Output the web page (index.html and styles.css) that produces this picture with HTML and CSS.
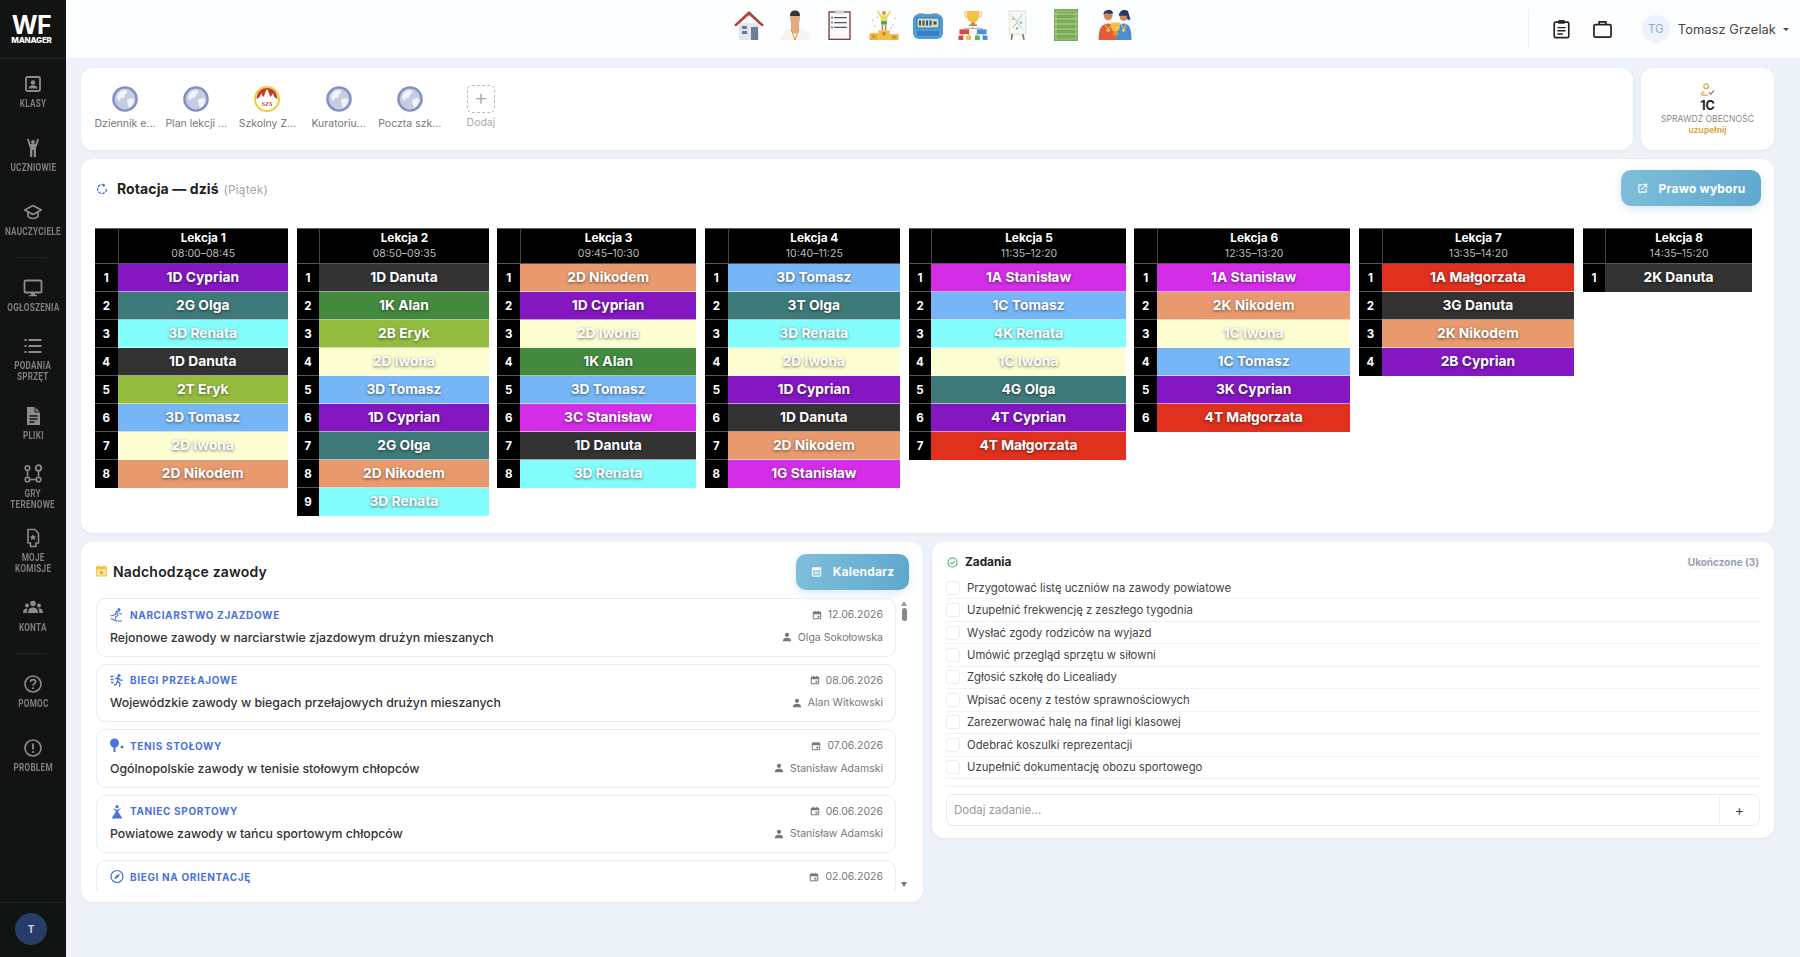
FILE: index.html
```html
<!DOCTYPE html>
<html lang="pl">
<head>
<meta charset="utf-8">
<title>WF Manager</title>
<link rel="stylesheet" href="styles.css">
</head>
<body>
<svg class="defs" width="0" height="0" aria-hidden="true">
  <defs>
    <symbol id="globe" viewBox="0 0 26 26">
      <circle cx="13" cy="13" r="11.6" fill="#c6cce3" stroke="#8490c4" stroke-width="2.4"/>
      <path d="M6 8c2-3 5-4.500 8-4l1.500 2.500-2.500 2-1 3-4 1-.5 3-2.500-3.500zM15 13.500l5-1.500 2.500 2-2.500 6-3 2-1.500-5z" fill="#f4f5fa"/>
    </symbol>
    <symbol id="cal" viewBox="0 0 12 12">
      <path d="M1.500 2.500h9v8h-9z" fill="none" stroke="#777" stroke-width="1.200"/>
      <path d="M1.500 2.500h9v2.500h-9zM6.500 7h2.500v2h-2.500zM3.500 1h1v2h-1zM7.500 1h1v2h-1z" fill="#777"/>
    </symbol>
    <symbol id="user" viewBox="0 0 12 12">
      <circle cx="6" cy="3.400" r="2.500" fill="#777"/>
      <path d="M1 11c0-3 2-4.200 5-4.200s5 1.200 5 4.200z" fill="#777"/>
    </symbol>
  </defs>
</svg>

<div class="app">
  <aside class="sidebar">
    <div class="logo">
      <span class="logo-wf">WF</span>
      <span class="logo-sub">MANAGER</span>
    </div>
    <nav class="nav">
      <a class="nav-item">
        <svg class="nav-icon" viewBox="0 0 20 20"><rect x="3" y="3" width="14" height="14" rx="1.500" fill="none" stroke="#8c8c88" stroke-width="1.800"/><circle cx="10" cy="8.500" r="2.300" fill="#8c8c88"/><path d="M5.500 14.500c.5-2.500 2.200-3.200 4.500-3.200s4 .7 4.500 3.200z" fill="#8c8c88"/></svg>
        <span class="nav-label">Klasy</span>
      </a>
      <a class="nav-item">
        <svg class="nav-icon" viewBox="0 0 20 20"><circle cx="10" cy="4" r="2" fill="#8c8c88"/><path d="M4 1l1.800-.3L7.500 6h5L14.200.7 16 1l-2.300 7.500-.7 1V19h-2.300v-7h-1.400v7H7V9.500l-.7-1z" fill="#8c8c88"/></svg>
        <span class="nav-label">Uczniowie</span>
      </a>
      <a class="nav-item">
        <svg class="nav-icon" viewBox="0 0 20 20"><path d="M10 3.500L1.800 8 10 12.500 18.200 8zM5 10.200v4.300c1.500 1.500 3.200 2 5 2s3.500-.5 5-2v-4.300" fill="none" stroke="#8c8c88" stroke-width="1.700" stroke-linejoin="round"/></svg>
        <span class="nav-label">Nauczyciele</span>
      </a>
      <div class="nav-divider"></div>
      <a class="nav-item">
        <svg class="nav-icon" viewBox="0 0 20 20"><rect x="1.500" y="2.500" width="17" height="12" rx="1" fill="none" stroke="#8c8c88" stroke-width="1.800"/><path d="M8 15h4v2h2v1.200H6V17h2z" fill="#8c8c88"/></svg>
        <span class="nav-label">Ogłoszenia</span>
      </a>
      <a class="nav-item">
        <svg class="nav-icon" viewBox="0 0 20 20"><path d="M5.500 4h13M5.500 10h13M5.500 16h13" stroke="#8c8c88" stroke-width="1.800" fill="none"/><path d="M1.500 3h2v2h-2zM1.500 9h2v2h-2zM1.500 15h2v2h-2z" fill="#8c8c88"/></svg>
        <span class="nav-label">Podania<br>sprzęt</span>
      </a>
      <a class="nav-item">
        <svg class="nav-icon" viewBox="0 0 20 20"><path d="M4 1h8l5 5v13H4z" fill="#8c8c88"/><path d="M12 1v5h5" fill="none" stroke="#111413" stroke-width="1"/><path d="M6.500 10h8M6.500 13h8M6.500 16h5" stroke="#111413" stroke-width="1.300"/></svg>
        <span class="nav-label">Pliki</span>
      </a>
      <a class="nav-item">
        <svg class="nav-icon" viewBox="0 0 20 20"><circle cx="4.500" cy="4" r="2.300" fill="none" stroke="#8c8c88" stroke-width="1.600"/><circle cx="15.500" cy="4" r="2.800" fill="none" stroke="#8c8c88" stroke-width="1.800"/><path d="M4.500 6.500v6M15.500 7v5.500M7 15.500h6" stroke="#8c8c88" stroke-width="1.600"/><circle cx="4.500" cy="15.500" r="2.300" fill="none" stroke="#8c8c88" stroke-width="1.600"/><circle cx="15.500" cy="15.500" r="2.300" fill="none" stroke="#8c8c88" stroke-width="1.600"/></svg>
        <span class="nav-label">Gry<br>terenowe</span>
      </a>
      <a class="nav-item">
        <svg class="nav-icon" viewBox="0 0 20 20"><path d="M5 1.500h7l3.500 4v9.500H13v3.500H7.500V15H5z" fill="none" stroke="#8c8c88" stroke-width="1.600" stroke-linejoin="round"/><path d="M10 6l1 2.200 2.300.2-1.700 1.600.5 2.300-2.100-1.200-2.100 1.200.5-2.300-1.700-1.600 2.300-.2z" fill="#8c8c88"/></svg>
        <span class="nav-label">Moje<br>komisje</span>
      </a>
      <a class="nav-item">
        <svg class="nav-icon" viewBox="0 0 20 20"><circle cx="10" cy="5.500" r="2.800" fill="#8c8c88"/><circle cx="4" cy="7.500" r="2" fill="#8c8c88"/><circle cx="16" cy="7.500" r="2" fill="#8c8c88"/><path d="M5 15c0-4 2-5.500 5-5.500s5 1.500 5 5.500zM0 15c0-3 1.300-4.500 3.500-4.500.5 0 .9.100 1.200.2C4 11.800 3.700 13 3.700 15zM20 15c0-3-1.300-4.500-3.500-4.500-.5 0-.9.100-1.200.2.700 1.100 1 2.300 1 4.300z" fill="#8c8c88"/></svg>
        <span class="nav-label">Konta</span>
      </a>
      <div class="nav-divider"></div>
      <a class="nav-item">
        <svg class="nav-icon" viewBox="0 0 20 20"><circle cx="10" cy="10" r="8" fill="none" stroke="#8c8c88" stroke-width="1.600"/><path d="M7.500 8c0-1.500 1.100-2.400 2.600-2.400s2.500 1 2.500 2.200c0 1.800-2.600 2-2.600 4" fill="none" stroke="#8c8c88" stroke-width="1.600"/><circle cx="10" cy="14.300" r="1" fill="#8c8c88"/></svg>
        <span class="nav-label">Pomoc</span>
      </a>
      <a class="nav-item">
        <svg class="nav-icon" viewBox="0 0 20 20"><circle cx="10" cy="10" r="8" fill="none" stroke="#8c8c88" stroke-width="1.600"/><path d="M10 5.500v6" stroke="#8c8c88" stroke-width="1.800"/><circle cx="10" cy="14" r="1.100" fill="#8c8c88"/></svg>
        <span class="nav-label">Problem</span>
      </a>
    </nav>
    <div class="side-foot"><span class="side-avatar">T</span></div>
  </aside>

  <div class="main">
    <header class="topbar">
      <div></div>
      <div class="top-icons">
        <svg class="ti ti-house" viewBox="0 0 30 30"><path d="M5 13h20v17H5z" fill="#e2e5ec"/><path d="M0 15L15 1l15 14-2 1.500L15 5 2 16.500z" fill="#b1423b"/><path d="M8 16h5v3H8zM8 21h5v3H8z" fill="#5e7ea6"/><path d="M17 17h7v13h-7z" fill="#6d7f98"/></svg>
        <svg class="ti ti-coach" viewBox="0 0 28 30"><path d="M0 30c0-7 4-10 10-11h8c6 1 10 4 10 11z" fill="#f7f4ef"/><path d="M10 12h8v9l-4 3-4-3z" fill="#e2ac80"/><ellipse cx="14" cy="8" rx="5" ry="7" fill="#e2ac80"/><path d="M9 6c0-4 2-5.500 5-5.500S19 2 19 6z" fill="#3a3432"/><path d="M10 19l4 11 4-11" fill="none" stroke="#d7913f" stroke-width="1"/></svg>
        <svg class="ti ti-clip" viewBox="0 0 23 31"><rect x=".7" y="2" width="21.600" height="28.300" fill="#fbfaf8" stroke="#7d3f40" stroke-width="1.400"/><path d="M7 .5h9v3.500H7z" fill="#cfd3d8"/><path d="M6 8h13M6 13h13M6 18h13" stroke="#4c5563" stroke-width="1.300"/><circle cx="3.800" cy="8" r="1.200" fill="#7c8ba0"/><circle cx="3.800" cy="13" r="1.200" fill="#7c8ba0"/><circle cx="3.800" cy="18" r="1.200" fill="#7c8ba0"/></svg>
        <svg class="ti ti-podium" viewBox="0 0 30 31"><path d="M0 24h9v7H0zM21 25h9v6h-9z" fill="#f0b23e"/><path d="M9 21h12v10H9z" fill="#f4bd4a"/><circle cx="15" cy="24.500" r="2" fill="#d98c1c"/><circle cx="4.500" cy="27.500" r="1.700" fill="#d98c1c"/><circle cx="25.500" cy="28" r="1.700" fill="#d98c1c"/><circle cx="15" cy="3" r="2" fill="#c98a5f"/><path d="M7.500 1l1.500-.5 3.500 5h5L21 .5 22.500 1 18.500 8v4h-7V8z" fill="#e8e05c"/><path d="M12 11.500h6V15h-6z" fill="#3aa66a"/><path d="M12.500 15h1.700v6h-1.700zM15.800 15h1.700v6h-1.700z" fill="#c98a5f"/><path d="M3 10h1v1H3zM26 8h1v1h-1zM5 16h1v1H5zM24 15h1v1h-1zM8 7h1v1H8zM22 18h1v1h-1z" fill="#e35a4b"/></svg>
        <svg class="ti ti-watch" viewBox="0 0 30 30"><path d="M5 3h6v3H5zM19 3h6v3h-6z" fill="#e8bd3a"/><rect y="4" width="30" height="25" rx="6" fill="#4b9ddd"/><rect x="4" y="8" width="22" height="10" fill="#cdd9cc" stroke="#2d5f88" stroke-width=".8"/><path d="M6 10.500h2v5H6zM9.500 10.500h2v5h-2zM13 10.500h2v5h-2zM16.500 10.500h2v5h-2zM20.500 11.500h3v3h-3z" fill="#44524c"/><rect x="4" y="21" width="22" height="5" fill="#3a7fc4"/></svg>
        <svg class="ti ti-tree" viewBox="0 0 30 31"><path d="M9 1h12v6c0 4-3 6-6 6s-6-2-6-6z" fill="#f2c14a"/><path d="M6 2h3v5H7zM21 2h3l-1 5h-2z" fill="none" stroke="#f2c14a"/><path d="M13 13h4v2h2v1.500h-8V15h2z" fill="#c4862c"/><path d="M15 17v3M6 21v-2h18v2M4 25v2M11 25v2M19 25v2M26 25v2" stroke="#8d99a8" stroke-width=".8" fill="none"/><path d="M1 20h10v5H1z" fill="#d94b3f"/><path d="M19 20h10v5H19z" fill="#4a90d9"/><path d="M0 26.500h5V31H0z" fill="#d94b3f"/><path d="M8 26.500h5V31H8z" fill="#f2c14a"/><path d="M17 26.500h5V31h-5z" fill="#5bb35a"/><path d="M25 26.500h5V31h-5z" fill="#4a90d9"/></svg>
        <svg class="ti ti-board" viewBox="0 0 19 31"><path d="M1 1h17v24H1z" fill="#f6f7f4" stroke="#d6d8d4" stroke-width=".8"/><path d="M4 6l5 6 5-7M5 18l4-5 5 6" fill="none" stroke="#9cb1a8" stroke-width=".8"/><circle cx="5" cy="9" r="1" fill="#d9a13a"/><circle cx="13" cy="13" r="1" fill="#3a9dd9"/><circle cx="9" cy="19" r="1" fill="#3aa65a"/><path d="M3 25h2l-1 6H2.500zM14 25h2l1 6h-1.500z" fill="#8f7660"/></svg>
        <svg class="ti ti-field" viewBox="0 0 24 32"><rect width="24" height="32" fill="#79ab5c"/><path d="M0 4h24v2H0zM0 9h24v2H0zM0 14h24v2H0zM0 19h24v2H0zM0 24h24v2H0z" fill="#94c06f"/><path d="M2 2h20v28H2z" fill="none" stroke="#b9d6a1" stroke-width=".6"/><path d="M6 7h2v1H6zM15 12h2v1h-2zM9 17h2v1H9zM17 22h2v1h-2zM5 27h2v1H5z" fill="#c98a2d"/></svg>
        <svg class="ti ti-medal" viewBox="0 0 35 31"><circle cx="10" cy="6" r="4.500" fill="#c98a5f"/><path d="M5 5c0-4 3-5 6-5s4 2 4 4c-3 0-6 0-7-1z" fill="#243a6a"/><path d="M0 31c0-12 3-17 10-17s8 5 8 17z" fill="#e25b3d"/><circle cx="26" cy="7" r="4.200" fill="#c98a5f"/><path d="M21 6c0-4 3-6 6-6s4 2 4 3l2 7h-3l-1-4c-3 0-6 0-8 0z" fill="#243a6a"/><path d="M18 31c0-12 2-17 8-17s8 5 8 17z" fill="#4a8ed0"/><path d="M13 13h9v5c0 3-2 4-4.500 4S13 21 13 18z" fill="#f2c14a"/><path d="M15 22h5v4h-5z" fill="#d99e34"/><path d="M6 14l4 6 4-6M23 14l3 6 3-6" fill="none" stroke="#f2d24a" stroke-width="1"/><circle cx="10" cy="21" r="1.800" fill="#f2c14a"/><circle cx="26" cy="21" r="1.800" fill="#f2c14a"/></svg>
      </div>
      <div class="top-right">
        <span class="top-sep"></span>
        <svg class="top-tool" viewBox="0 0 20 22"><rect x="2" y="3.500" width="16" height="17" rx="1.500" fill="none" stroke="#222" stroke-width="1.800"/><path d="M6.500 1.200h7v4h-7z" fill="#222"/><path d="M5.500 9.500h9M5.500 13h9M5.500 16.500h6" stroke="#222" stroke-width="1.600"/></svg>
        <svg class="top-tool" viewBox="0 0 20 20"><rect x="1" y="5.500" width="18" height="13" rx="1.500" fill="none" stroke="#222" stroke-width="1.800"/><path d="M6.500 5.500V2.500h7v3" fill="none" stroke="#222" stroke-width="1.800"/></svg>
        <span class="tg">TG</span>
        <span class="top-name">Tomasz Grzelak</span>
        <span class="caret"></span>
      </div>
    </header>

    <main class="content">
      <section class="row-links">
        <div class="card links">
          <a class="link"><svg class="globe"><use href="#globe"/></svg><span class="link-name">Dziennik e…</span></a>
          <a class="link"><svg class="globe"><use href="#globe"/></svg><span class="link-name">Plan lekcji …</span></a>
          <a class="link">
            <svg class="globe" viewBox="0 0 26 26"><circle cx="13" cy="13" r="12" fill="#fff" stroke="#f1cd3b" stroke-width="2"/><path d="M2.500 13C3 6 7 2 13 2s10 4 10.500 11c-3-1-4-3-4.500-6-1 2-1.500 3-3 4-.5-3-1.500-6-3-8-1.500 2-2.500 5-3 8-1.500-1-2-2-3-4-.5 3-1.500 5-4.500 6z" fill="#c23a2b"/><text class="szs" x="13" y="20" text-anchor="middle">SZS</text></svg>
            <span class="link-name">Szkolny Z…</span>
          </a>
          <a class="link"><svg class="globe"><use href="#globe"/></svg><span class="link-name">Kuratoriu…</span></a>
          <a class="link"><svg class="globe"><use href="#globe"/></svg><span class="link-name">Poczta szk…</span></a>
          <a class="link link-add"><span class="add-box">+</span><span class="link-name">Dodaj</span></a>
        </div>
        <div class="card attend">
          <svg class="attend-icon" viewBox="0 0 16 14"><circle cx="6.500" cy="3.500" r="2.500" fill="none" stroke="#d8a94a" stroke-width="1.300"/><path d="M1.500 13c0-2 .8-3 3-3.500M1.500 13h7" fill="none" stroke="#d8a94a" stroke-width="1.300"/><path d="M9.500 10l2 2 3.500-4" fill="none" stroke="#777" stroke-width="1.100"/></svg>
          <strong class="attend-class">1C</strong>
          <span class="attend-text">Sprawdź obecność</span>
          <span class="attend-link">uzupełnij</span>
        </div>
      </section>

      <section class="card rotation">
        <div class="rot-head">
          <h2 class="rot-title">
            <svg class="rot-icon" viewBox="0 0 12 12"><path d="M10.500 6a4.500 4.500 0 1 1-2-3.700" fill="none" stroke="#4a72dc" stroke-width="1.300" stroke-dasharray="3 1"/><path d="M7 .2l2.500 2.200L7 4z" fill="#4a72dc"/></svg>
            Rotacja — dziś <span class="rot-day">(Piątek)</span>
          </h2>
          <button class="btn btn-choice">
            <svg class="btn-icon" viewBox="0 0 12 12"><path d="M6 2H2v8h8V6" fill="none" stroke="#fff" stroke-width="1.200"/><path d="M5 7l5-5M7 1.500h3.500V5" fill="none" stroke="#fff" stroke-width="1.200"/></svg>
            Prawo wyboru
          </button>
        </div>
        <div class="lessons">
          <table class="lesson">
            <thead><tr><th class="n"></th><th>Lekcja 1<small>08:00–08:45</small></th></tr></thead>
            <tbody>
              <tr><td class="n">1</td><td class="c-cyprian">1D Cyprian</td></tr>
              <tr><td class="n">2</td><td class="c-olga">2G Olga</td></tr>
              <tr><td class="n">3</td><td class="c-renata">3D Renata</td></tr>
              <tr><td class="n">4</td><td class="c-danuta">1D Danuta</td></tr>
              <tr><td class="n">5</td><td class="c-eryk">2T Eryk</td></tr>
              <tr><td class="n">6</td><td class="c-tomasz">3D Tomasz</td></tr>
              <tr><td class="n">7</td><td class="c-iwona">2D Iwona</td></tr>
              <tr><td class="n">8</td><td class="c-nikodem">2D Nikodem</td></tr>
            </tbody>
          </table>
          <table class="lesson">
            <thead><tr><th class="n"></th><th>Lekcja 2<small>08:50–09:35</small></th></tr></thead>
            <tbody>
              <tr><td class="n">1</td><td class="c-danuta">1D Danuta</td></tr>
              <tr><td class="n">2</td><td class="c-alan">1K Alan</td></tr>
              <tr><td class="n">3</td><td class="c-eryk">2B Eryk</td></tr>
              <tr><td class="n">4</td><td class="c-iwona">2D Iwona</td></tr>
              <tr><td class="n">5</td><td class="c-tomasz">3D Tomasz</td></tr>
              <tr><td class="n">6</td><td class="c-cyprian">1D Cyprian</td></tr>
              <tr><td class="n">7</td><td class="c-olga">2G Olga</td></tr>
              <tr><td class="n">8</td><td class="c-nikodem">2D Nikodem</td></tr>
              <tr><td class="n">9</td><td class="c-renata">3D Renata</td></tr>
            </tbody>
          </table>
          <table class="lesson">
            <thead><tr><th class="n"></th><th>Lekcja 3<small>09:45–10:30</small></th></tr></thead>
            <tbody>
              <tr><td class="n">1</td><td class="c-nikodem">2D Nikodem</td></tr>
              <tr><td class="n">2</td><td class="c-cyprian">1D Cyprian</td></tr>
              <tr><td class="n">3</td><td class="c-iwona">2D Iwona</td></tr>
              <tr><td class="n">4</td><td class="c-alan">1K Alan</td></tr>
              <tr><td class="n">5</td><td class="c-tomasz">3D Tomasz</td></tr>
              <tr><td class="n">6</td><td class="c-stanislaw">3C Stanisław</td></tr>
              <tr><td class="n">7</td><td class="c-danuta">1D Danuta</td></tr>
              <tr><td class="n">8</td><td class="c-renata">3D Renata</td></tr>
            </tbody>
          </table>
          <table class="lesson">
            <thead><tr><th class="n"></th><th>Lekcja 4<small>10:40–11:25</small></th></tr></thead>
            <tbody>
              <tr><td class="n">1</td><td class="c-tomasz">3D Tomasz</td></tr>
              <tr><td class="n">2</td><td class="c-olga">3T Olga</td></tr>
              <tr><td class="n">3</td><td class="c-renata">3D Renata</td></tr>
              <tr><td class="n">4</td><td class="c-iwona">2D Iwona</td></tr>
              <tr><td class="n">5</td><td class="c-cyprian">1D Cyprian</td></tr>
              <tr><td class="n">6</td><td class="c-danuta">1D Danuta</td></tr>
              <tr><td class="n">7</td><td class="c-nikodem">2D Nikodem</td></tr>
              <tr><td class="n">8</td><td class="c-stanislaw">1G Stanisław</td></tr>
            </tbody>
          </table>
          <table class="lesson">
            <thead><tr><th class="n"></th><th>Lekcja 5<small>11:35–12:20</small></th></tr></thead>
            <tbody>
              <tr><td class="n">1</td><td class="c-stanislaw">1A Stanisław</td></tr>
              <tr><td class="n">2</td><td class="c-tomasz">1C Tomasz</td></tr>
              <tr><td class="n">3</td><td class="c-renata">4K Renata</td></tr>
              <tr><td class="n">4</td><td class="c-iwona">1C Iwona</td></tr>
              <tr><td class="n">5</td><td class="c-olga">4G Olga</td></tr>
              <tr><td class="n">6</td><td class="c-cyprian">4T Cyprian</td></tr>
              <tr><td class="n">7</td><td class="c-malgorzata">4T Małgorzata</td></tr>
            </tbody>
          </table>
          <table class="lesson">
            <thead><tr><th class="n"></th><th>Lekcja 6<small>12:35–13:20</small></th></tr></thead>
            <tbody>
              <tr><td class="n">1</td><td class="c-stanislaw">1A Stanisław</td></tr>
              <tr><td class="n">2</td><td class="c-nikodem">2K Nikodem</td></tr>
              <tr><td class="n">3</td><td class="c-iwona">1C Iwona</td></tr>
              <tr><td class="n">4</td><td class="c-tomasz">1C Tomasz</td></tr>
              <tr><td class="n">5</td><td class="c-cyprian">3K Cyprian</td></tr>
              <tr><td class="n">6</td><td class="c-malgorzata">4T Małgorzata</td></tr>
            </tbody>
          </table>
          <table class="lesson">
            <thead><tr><th class="n"></th><th>Lekcja 7<small>13:35–14:20</small></th></tr></thead>
            <tbody>
              <tr><td class="n">1</td><td class="c-malgorzata">1A Małgorzata</td></tr>
              <tr><td class="n">2</td><td class="c-danuta">3G Danuta</td></tr>
              <tr><td class="n">3</td><td class="c-nikodem">2K Nikodem</td></tr>
              <tr><td class="n">4</td><td class="c-cyprian">2B Cyprian</td></tr>
            </tbody>
          </table>
          <table class="lesson">
            <thead><tr><th class="n"></th><th>Lekcja 8<small>14:35–15:20</small></th></tr></thead>
            <tbody>
              <tr><td class="n">1</td><td class="c-danuta">2K Danuta</td></tr>
            </tbody>
          </table>
        </div>
      </section>

      <section class="row-bottom">
        <div class="card events">
          <div class="ev-head">
            <h2 class="ev-title">
              <svg class="ev-title-icon" viewBox="0 0 12 12"><path d="M.5 1.500h11v10H.5z" fill="#fbe3a0" stroke="#f3c23f" stroke-width="1"/><path d="M.5 1.500h11v2.500H.5zM2.500 0h1.500v2H2.500zM8 0h1.500v2H8z" fill="#f3c23f"/><path d="M6 5.500l.8 1.500 1.600.2-1.200 1.100.3 1.600L6 9.200l-1.500.7.300-1.600-1.200-1.100 1.600-.2z" fill="#e8a020"/></svg>
              Nadchodzące zawody
            </h2>
            <button class="btn btn-cal">
              <svg class="btn-icon" viewBox="0 0 12 12"><rect x="1.500" y="2" width="9" height="9" rx="1" fill="none" stroke="#fff" stroke-width="1.200"/><path d="M1.500 2h9v2.500h-9zM3 6h6v1H3zM3 8h6v1H3z" fill="#fff"/></svg>
              Kalendarz
            </button>
          </div>
          <div class="ev-wrap">
            <div class="ev-list">
              <article class="ev">
                <div class="ev-line">
                  <svg class="ev-icon" viewBox="0 0 14 14"><circle cx="9" cy="2" r="1.500" fill="#4a72dc"/><path d="M.5 8.500l5-1.500 1-3.500 3 .5M6.500 3.500L8 8l-2.500 1.500V12M1 11l5 2.500h6M9 6l3 .5" fill="none" stroke="#4a72dc" stroke-width="1.100"/></svg>
                  <span class="ev-cat">Narciarstwo zjazdowe</span>
                  <span class="ev-meta"><svg class="meta-icon"><use href="#cal"/></svg>12.06.2026</span>
                </div>
                <div class="ev-line">
                  <span class="ev-name">Rejonowe zawody w narciarstwie zjazdowym drużyn mieszanych</span>
                  <span class="ev-meta"><svg class="meta-icon"><use href="#user"/></svg>Olga Sokołowska</span>
                </div>
              </article>
              <article class="ev">
                <div class="ev-line">
                  <svg class="ev-icon" viewBox="0 0 14 14"><circle cx="9" cy="2" r="1.600" fill="#4a72dc"/><path d="M5 5.500l3-1.500 2 2.500 2.500.5M8 4l-.5 4 2.500 2-.5 3.500M7.500 8L6 11l-2 .5M.5 3h3M.5 6h3M1 9h2.500" fill="none" stroke="#4a72dc" stroke-width="1.300"/></svg>
                  <span class="ev-cat">Biegi przełajowe</span>
                  <span class="ev-meta"><svg class="meta-icon"><use href="#cal"/></svg>08.06.2026</span>
                </div>
                <div class="ev-line">
                  <span class="ev-name">Wojewódzkie zawody w biegach przełajowych drużyn mieszanych</span>
                  <span class="ev-meta"><svg class="meta-icon"><use href="#user"/></svg>Alan Witkowski</span>
                </div>
              </article>
              <article class="ev">
                <div class="ev-line">
                  <svg class="ev-icon" viewBox="0 0 14 14"><circle cx="4.500" cy="4.500" r="4.500" fill="#4a72dc"/><path d="M3.500 8h2v5.500h-2z" fill="#4a72dc"/><circle cx="12" cy="8.500" r="1.500" fill="#4a72dc"/></svg>
                  <span class="ev-cat">Tenis stołowy</span>
                  <span class="ev-meta"><svg class="meta-icon"><use href="#cal"/></svg>07.06.2026</span>
                </div>
                <div class="ev-line">
                  <span class="ev-name">Ogólnopolskie zawody w tenisie stołowym chłopców</span>
                  <span class="ev-meta"><svg class="meta-icon"><use href="#user"/></svg>Stanisław Adamski</span>
                </div>
              </article>
              <article class="ev">
                <div class="ev-line">
                  <svg class="ev-icon" viewBox="0 0 14 14"><circle cx="7" cy="2.200" r="1.600" fill="#4a72dc"/><path d="M3 3.500l4 2 4-2-3 3.500 4.500 7H1.500L6 7z" fill="#4a72dc"/></svg>
                  <span class="ev-cat">Taniec sportowy</span>
                  <span class="ev-meta"><svg class="meta-icon"><use href="#cal"/></svg>06.06.2026</span>
                </div>
                <div class="ev-line">
                  <span class="ev-name">Powiatowe zawody w tańcu sportowym chłopców</span>
                  <span class="ev-meta"><svg class="meta-icon"><use href="#user"/></svg>Stanisław Adamski</span>
                </div>
              </article>
              <article class="ev">
                <div class="ev-line">
                  <svg class="ev-icon" viewBox="0 0 14 14"><circle cx="7" cy="7" r="6" fill="none" stroke="#4a72dc" stroke-width="1.200"/><path d="M10 4L8 8 4 10l2-4z" fill="#4a72dc"/></svg>
                  <span class="ev-cat">Biegi na orientację</span>
                  <span class="ev-meta"><svg class="meta-icon"><use href="#cal"/></svg>02.06.2026</span>
                </div>
              </article>
            </div>
            <div class="scroll">
              <span class="arrow-up"></span>
              <span class="thumb"></span>
              <span class="arrow-down"></span>
            </div>
          </div>
        </div>

        <div class="card tasks">
          <div class="task-head">
            <h2 class="task-title">
              <svg class="task-icon" viewBox="0 0 12 12"><circle cx="6" cy="6" r="5" fill="none" stroke="#4aa368" stroke-width="1.100"/><path d="M3.500 6l1.800 1.800 3.200-3.400" fill="none" stroke="#4aa368" stroke-width="1.100"/></svg>
              Zadania
            </h2>
            <span class="task-done">Ukończone (3)</span>
          </div>
          <ul class="task-list">
            <li class="task"><span class="check"></span>Przygotować listę uczniów na zawody powiatowe</li>
            <li class="task"><span class="check"></span>Uzupełnić frekwencję z zeszłego tygodnia</li>
            <li class="task"><span class="check"></span>Wysłać zgody rodziców na wyjazd</li>
            <li class="task"><span class="check"></span>Umówić przegląd sprzętu w siłowni</li>
            <li class="task"><span class="check"></span>Zgłosić szkołę do Licealiady</li>
            <li class="task"><span class="check"></span>Wpisać oceny z testów sprawnościowych</li>
            <li class="task"><span class="check"></span>Zarezerwować halę na finał ligi klasowej</li>
            <li class="task"><span class="check"></span>Odebrać koszulki reprezentacji</li>
            <li class="task"><span class="check"></span>Uzupełnić dokumentację obozu sportowego</li>
          </ul>
          <div class="task-add">
            <span class="task-input">Dodaj zadanie...</span>
            <span class="task-plus">+</span>
          </div>
        </div>
      </section>
    </main>
  </div>
</div>
</body>
</html>
```

FILE: styles.css
```css
* { box-sizing: border-box; }
html, body { margin: 0; height: 100%; }
body {
  background: #edf1f8;
  color: #222;
  font-family: Inter, "Open Sans", "Liberation Sans", sans-serif;
  overflow: hidden;
}
.defs { position: absolute; }
h2 { margin: 0; }
a { color: inherit; text-decoration: none; }
ul { margin: 0; padding: 0; list-style: none; }
button { border: 0; font-family: inherit; }

.app { display: flex; height: 957px; }

/* Sidebar */
.sidebar {
  width: 66px;
  flex: none;
  background: #111413;
  display: flex;
  flex-direction: column;
}
.logo {
  height: 59px;
  flex: none;
  border-bottom: 1px solid #1d201f;
  display: flex;
  flex-direction: column;
  align-items: center;
  justify-content: center;
  color: #fff;
  padding-right: 3px;
  padding-top: 3px;
}
.logo-wf { font: 700 25px/19px Inter, sans-serif; letter-spacing: -.6px; }
.logo-sub { font: 800 8px/10px Inter, sans-serif; letter-spacing: -.2px; }
.nav { flex: 1; display: flex; flex-direction: column; }
.nav-item {
  height: 64px;
  flex: none;
  display: flex;
  flex-direction: column;
  align-items: center;
  justify-content: center;
  gap: 4px;
}
.nav-icon { width: 20px; height: 20px; }
.nav-label {
  font: 700 10.5px/11px Roboto, sans-serif;
  letter-spacing: .3px;
  text-transform: uppercase;
  text-align: center;
  color: #7f7f79;
  white-space: nowrap;
  transform: scaleX(.78);
}
.nav-divider {
  height: 12px;
  flex: none;
  position: relative;
}
.nav-divider::after {
  content: "";
  position: absolute;
  left: 16px;
  right: 20px;
  top: 6px;
  border-top: 1px solid #1f2221;
}
.side-foot {
  height: 55px;
  flex: none;
  border-top: 1px solid #1d201f;
  display: flex;
  justify-content: center;
  padding: 10px 4px 0 0;
}
.side-avatar {
  width: 32px;
  height: 32px;
  border-radius: 50%;
  background: #283c68;
  color: #cdd6ea;
  font-size: 10px;
  font-weight: 700;
  display: flex;
  align-items: center;
  justify-content: center;
}

/* Main */
.main { flex: 1; min-width: 0; display: flex; flex-direction: column; }
.topbar {
  height: 59px;
  flex: none;
  background: #fcfdfe;
  border-bottom: 1px solid #e9edf2;
  display: grid;
  grid-template-columns: 1fr auto 1fr;
  align-items: center;
}
.top-icons { display: flex; align-items: center; padding-bottom: 9px; }
.ti { flex: none; height: 30px; }
.ti-house { width: 30px; margin-right: 17px; }
.ti-coach { width: 28px; margin-right: 19px; }
.ti-clip { width: 23px; margin-right: 18px; }
.ti-podium { width: 30px; margin-right: 14px; }
.ti-watch { width: 30px; margin-right: 15px; }
.ti-tree { width: 30px; margin-right: 20px; }
.ti-board { width: 19px; margin-right: 27px; }
.ti-field { width: 24px; height: 32px; margin-right: 20px; }
.ti-medal { width: 35px; }
.top-right {
  display: flex;
  align-items: center;
  justify-content: flex-end;
  padding-right: 11px;
}
.top-sep { width: 1px; height: 38px; background: #edf0f4; margin-right: 23px; }
.top-tool { width: 19px; height: 20px; margin-right: 22px; }
.top-tool + .top-tool { margin-right: 30px; }
.tg {
  width: 28px;
  height: 28px;
  border-radius: 50%;
  background: #eef2fc;
  color: #8fa9dd;
  font-size: 11.5px;
  display: flex;
  align-items: center;
  justify-content: center;
  margin-right: 8px;
}
.top-name { font-size: 12.8px; color: #444; letter-spacing: .1px; }
.caret {
  border: 3px solid transparent;
  border-top-color: #444;
  border-bottom: 0;
  margin-left: 7px;
}

.content {
  flex: 1;
  min-height: 0;
  padding: 9px 26px 0 15px;
  display: flex;
  flex-direction: column;
  gap: 9px;
}
.card {
  background: #fff;
  border-radius: 12px;
  box-shadow: 0 1px 3px rgba(120, 135, 165, .1);
}

/* Links row */
.row-links { display: flex; gap: 8px; }
.links {
  flex: 1;
  height: 82px;
  display: flex;
  gap: 14.2px;
  padding: 18px 15.5px 0;
}
.link {
  width: 57px;
  display: flex;
  flex-direction: column;
  align-items: center;
  gap: 5px;
}
.globe { width: 26px; height: 26px; filter: blur(.5px); }
.szs { font: italic 700 6.5px "Liberation Serif", serif; fill: #c23a2b; }
.link-name {
  font-size: 10.5px;
  line-height: 14px;
  color: #777;
  text-align: center;
  white-space: nowrap;
}
.link-add .link-name { color: #aaa; }
.add-box {
  width: 28px;
  height: 28px;
  margin-bottom: -2px;
  margin-top: -1px;
  border: 1.500px dashed #b9b9b9;
  border-radius: 5px;
  color: #aaa;
  font-size: 22px;
  font-weight: 300;
  line-height: 23px;
  text-align: center;
}
.attend {
  width: 133px;
  height: 82px;
  flex: none;
  display: flex;
  flex-direction: column;
  align-items: center;
  padding-top: 15px;
}
.attend-icon { width: 15px; height: 13px; margin-bottom: 2px; }
.attend-class { font-size: 12.5px; line-height: 15px; color: #222; }
.attend-text {
  font-size: 8.600px;
  line-height: 12px;
  color: #8a8a8a;
  text-transform: uppercase;
  white-space: nowrap;
}
.attend-link { font-size: 8.500px; line-height: 11px; font-weight: 700; color: #d9a94a; }

/* Rotation */
.rotation { height: 374px; padding: 11px 13px 0 14px; }
.rot-head {
  display: flex;
  align-items: center;
  justify-content: space-between;
  height: 36px;
  padding-top: 1px;
}
.rot-title {
  display: flex;
  align-items: baseline;
  gap: 5px;
  font-size: 14px;
  font-weight: 700;
  color: #222;
  letter-spacing: .1px;
  padding-left: 1px;
}
.rot-icon { width: 12px; height: 12px; margin-right: 4px; align-self: center; }
.rot-day { font-size: 12px; font-weight: 400; color: #a4a7af; }
.btn {
  display: flex;
  align-items: center;
  justify-content: center;
  gap: 11px;
  height: 36px;
  border-radius: 10px;
  background: linear-gradient(100deg, #80bedb, #5fa8cd);
  color: #fff;
  font-size: 12px;
  font-weight: 700;
  letter-spacing: .2px;
  box-shadow: 0 3px 8px rgba(95, 168, 205, .25);
}
.btn-choice { width: 140px; margin-top: -1px; }
.btn-cal { width: 113px; }
.btn-icon { width: 11px; height: 11px; flex: none; }

.lessons {
  margin-top: 22px;
  display: grid;
  grid-template-columns: 193px 192px 199px 195px 217px 216px 215px 169px;
  column-gap: 8.700px;
  align-items: start;
  padding-right: 8px;
}
.lesson {
  width: 100%;
  table-layout: fixed;
  border-collapse: separate;
  border-spacing: 0;
}
.lesson th {
  height: 36px;
  background: #000;
  color: #fff;
  font-size: 11.8px;
  font-weight: 700;
  line-height: 15px;
  padding: 0;
  border-top: 1px solid #666;
  border-bottom: 1px solid #555;
  border-left: 1px solid #444;
}
.lesson th.n { width: 22.500px; border-left: 0; }
.lesson small {
  display: block;
  font-size: 10.5px;
  font-weight: 400;
  color: #bbb;
}
.lesson td {
  height: 28px;
  padding: 0 0 2px;
  text-align: center;
  color: #fff;
  font-size: 13.8px;
  font-weight: 700;
  text-shadow: 0 1px 3px rgba(0, 0, 0, .55);
  border-bottom: 1px solid rgba(255, 255, 255, .55);
}
.lesson td.n {
  background: #000;
  font-size: 11.5px;
  text-shadow: none;
  padding: 0;
  border-bottom-color: #555;
}
.lesson tr:last-child td { border-bottom: 0; }
.c-cyprian { background: #8517c2; }
.c-olga { background: #3f7a7a; }
.c-renata { background: #84fdfd; }
.c-danuta { background: #333; }
.c-eryk { background: #94bd3f; }
.c-tomasz { background: #76b6f7; }
.c-iwona { background: #fdfdd2; }
.c-nikodem { background: #e89a6e; }
.c-alan { background: #438a3f; }
.c-stanislaw { background: #d42de8; }
.c-malgorzata { background: #e0301e; }

/* Bottom row */
.row-bottom {
  display: grid;
  grid-template-columns: 842px 842px;
  column-gap: 9px;
  align-items: start;
}
.events { height: 360px; padding: 12px 14px 0 15px; }
.ev-head {
  display: flex;
  align-items: center;
  justify-content: space-between;
  height: 35px;
  margin-bottom: 9px;
}
.ev-title {
  display: flex;
  align-items: center;
  gap: 6px;
  font-size: 14px;
  font-weight: 600;
  color: #222;
  letter-spacing: .2px;
  margin-top: -1px;
}
.ev-title-icon { width: 11px; height: 12px; }
.ev-wrap { display: flex; height: 292px; overflow: hidden; }
.ev-list {
  width: 800px;
  flex: none;
  display: flex;
  flex-direction: column;
  gap: 7px;
}
.ev {
  height: 58.600px;
  flex: none;
  border: 1px solid #e9ecf2;
  border-radius: 10px;
  padding: 5px 12px 0 13px;
}
.ev-line {
  display: flex;
  align-items: center;
  height: 21px;
  gap: 7px;
}
.ev-line + .ev-line { margin-top: 1.500px; }
.ev-icon { width: 14px; height: 15px; flex: none; margin-right: -1px; }
.ev-cat {
  font-size: 10px;
  font-weight: 700;
  letter-spacing: .65px;
  text-transform: uppercase;
  color: #4a72dc;
}
.ev-name { font-size: 12.300px; font-weight: 500; color: #333; }
.ev-meta {
  margin-left: auto;
  display: flex;
  align-items: center;
  gap: 6px;
  font-size: 10.5px;
  color: #777;
}
.meta-icon { width: 10px; height: 10px; }
.scroll {
  flex: 1;
  position: relative;
}
.arrow-up, .arrow-down, .thumb { position: absolute; left: 5px; }
.arrow-up {
  top: 3px;
  border: 3.500px solid transparent;
  border-bottom: 5px solid #999;
  border-top: 0;
}
.thumb {
  top: 10px;
  left: 6px;
  width: 5px;
  height: 13px;
  border-radius: 3px;
  background: #888;
}
.arrow-down {
  top: 284px;
  border: 3.500px solid transparent;
  border-top: 5px solid #777;
  border-bottom: 0;
}

.tasks { height: 296px; padding: 12px 14px 0 14px; }
.task-head {
  display: flex;
  align-items: center;
  justify-content: space-between;
  height: 16px;
}
.task-title {
  display: flex;
  align-items: center;
  gap: 7px;
  font-size: 11.8px;
  font-weight: 700;
  color: #222;
  padding-left: 1px;
}
.task-icon { width: 11px; height: 11px; }
.task-done {
  font-size: 10px;
  font-weight: 700;
  color: #9aa0ae;
  border: 1px solid #f2f4f7;
  border-radius: 7px;
}
.task-list { margin-top: 7px; padding-bottom: 7px; border-bottom: 1px solid #eef0f4; }
.task {
  height: 22.450px;
  display: flex;
  align-items: center;
  gap: 7px;
  font-size: 11.3px;
  color: #444;
  border-bottom: 1px solid #f0f2f5;
  white-space: nowrap;
}
.check {
  width: 14px;
  height: 14px;
  flex: none;
  border: 1px solid #eaedf1;
  border-radius: 3px;
}
.task-add {
  margin-top: 7px;
  height: 32px;
  display: flex;
  align-items: center;
  border: 1px solid #e9ecf2;
  border-radius: 7px;
}
.task-input { flex: 1; font-size: 11.5px; color: #9a9a9a; padding-left: 7px; }
.task-plus {
  width: 40px;
  height: 100%;
  border-left: 1px solid #eef0f4;
  font-size: 14px;
  line-height: 29px;
  text-align: center;
  color: #444;
}
```
